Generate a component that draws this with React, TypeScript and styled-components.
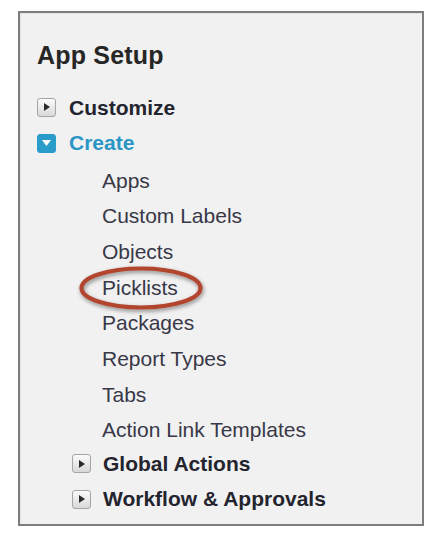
import React from "react";
import styled, { createGlobalStyle } from "styled-components";

const Global = createGlobalStyle`
  html, body { margin: 0; padding: 0; background: #ffffff; }
  body { font-family: "Liberation Sans", Arial, sans-serif; }
`;

const Page = styled.div`
  padding: 11px 0 0 18px;
`;

const Panel = styled.div`
  box-sizing: content-box;
  width: 385px;
  height: 484px;
  border: 2px solid #7d7d7d;
  background: #f1f1f1;
  box-shadow: inset 1px 1px 0 #e4e4e4;
  padding: 27px 0 0 17px;
`;

const Title = styled.h2`
  margin: 0 0 19.6px 0;
  font-size: 25px;
  line-height: 30px;
  font-weight: bold;
  color: #262626;
  letter-spacing: 0.2px;
`;

const List = styled.div`
  display: flex;
  flex-direction: column;
`;

const Row = styled.div<{ $indent?: number; $shift?: number }>`
  display: flex;
  align-items: center;
  height: 35.64px;
  padding-left: ${(p) => p.$indent ?? 0}px;
  margin-top: ${(p) => p.$shift ?? 0}px;
`;

const Toggle = styled.span<{ $open?: boolean; $gap?: number }>`
  width: 19px;
  height: 19px;
  box-sizing: border-box;
  border-radius: 3px;
  margin-right: ${(p) => p.$gap ?? 13}px;
  display: inline-flex;
  align-items: center;
  justify-content: center;
  flex: none;
  background: ${(p) =>
    p.$open ? "#2a9cca" : "linear-gradient(#fbfbfb, #d8d8d8)"};
  border: 1px solid ${(p) => (p.$open ? "#2a9cca" : "#a5a5a5")};
`;

const Label = styled.span<{ $bold?: boolean; $active?: boolean }>`
  position: relative;
  font-size: 21px;
  line-height: 35.64px;
  font-weight: ${(p) => (p.$bold ? "bold" : "normal")};
  color: ${(p) => (p.$active ? "#2b96c6" : p.$bold ? "#24242f" : "#383848")};
  white-space: nowrap;
`;

const Circle = styled.svg`
  position: absolute;
  left: -24px;
  top: -4px;
  width: 128px;
  height: 46px;
  overflow: visible;
  pointer-events: none;
`;

const Arrow = ({ open, gap }: { open?: boolean; gap?: number }) => (
  <Toggle $open={open} $gap={gap}>
    {open ? (
      <svg width="9" height="6" viewBox="0 0 9 6">
        <path d="M0 0 L9 0 L4.5 6 Z" fill="#ffffff" />
      </svg>
    ) : (
      <svg width="6" height="8" viewBox="0 0 6 8">
        <path d="M0 0 L6 4 L0 8 Z" fill="#2a2a2a" />
      </svg>
    )}
  </Toggle>
);

const Sub = ({
  children,
  mark,
  shift,
}: {
  children: React.ReactNode;
  mark?: boolean;
  shift?: number;
}) => (
  <Row $indent={65} $shift={shift}>
    <Label>
      {children}
      {mark && (
        <Circle viewBox="0 0 128 46">
          <defs>
            <filter id="sh" x="-20%" y="-40%" width="140%" height="180%">
              <feGaussianBlur in="SourceAlpha" stdDeviation="2" />
              <feOffset dx="1" dy="2" result="b" />
              <feComponentTransfer>
                <feFuncA type="linear" slope="0.45" />
              </feComponentTransfer>
              <feMerge>
                <feMergeNode />
                <feMergeNode in="SourceGraphic" />
              </feMerge>
            </filter>
          </defs>
          <ellipse
            cx="63"
            cy="22"
            rx="59.5"
            ry="19.5"
            fill="none"
            stroke="#b2442e"
            strokeWidth="4.2"
            filter="url(#sh)"
          />
        </Circle>
      )}
    </Label>
  </Row>
);

export default function App() {
  return (
    <>
      <Global />
      <Page>
        <Panel>
          <Title>App Setup</Title>
          <List>
            <Row>
              <Arrow />
              <Label $bold>Customize</Label>
            </Row>
            <Row>
              <Arrow open />
              <Label $bold $active>Create</Label>
            </Row>
            <Sub shift={2}>Apps</Sub>
            <Sub>Custom Labels</Sub>
            <Sub>Objects</Sub>
            <Sub mark>Picklists</Sub>
            <Sub>Packages</Sub>
            <Sub>Report Types</Sub>
            <Sub>Tabs</Sub>
            <Sub>Action Link Templates</Sub>
            <Row $indent={35} $shift={-2}>
              <Arrow gap={12} />
              <Label $bold>Global Actions</Label>
            </Row>
            <Row $indent={35}>
              <Arrow gap={12} />
              <Label $bold>Workflow &amp; Approvals</Label>
            </Row>
          </List>
        </Panel>
      </Page>
    </>
  );
}
